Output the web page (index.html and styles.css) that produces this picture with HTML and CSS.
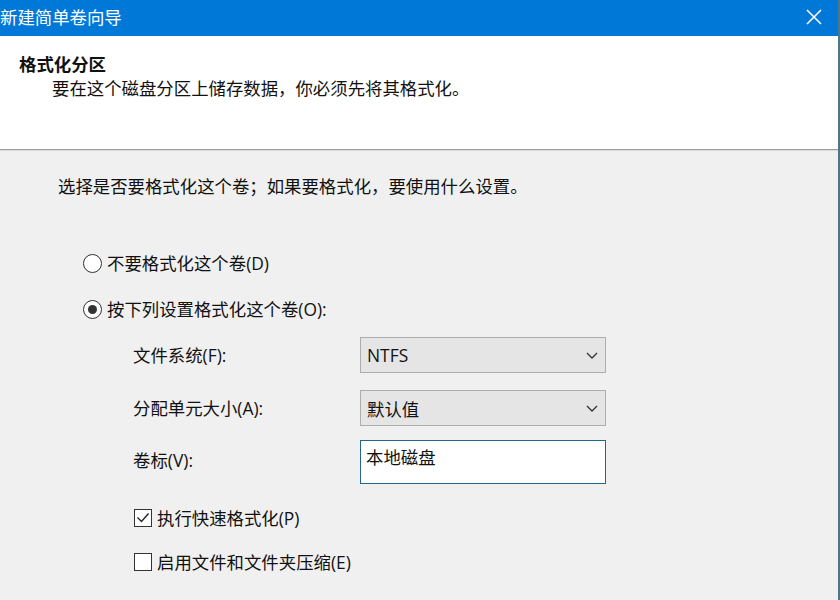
FILE: index.html
```html
<!DOCTYPE html>
<html lang="zh-CN">
<head>
<meta charset="utf-8">
<title>新建简单卷向导</title>
<link rel="stylesheet" href="styles.css">
</head>
<body>
<div class="window">
  <div class="titlebar">
    <span class="title">新建简单卷向导</span>
    <svg class="close" width="16" height="16" viewBox="0 0 16 16">
      <path d="M1 1 L15 15 M15 1 L1 15" stroke="#fff" stroke-width="1.6" fill="none"/>
    </svg>
  </div>

  <div class="header">
    <div class="header-title">格式化分区</div>
    <div class="header-sub">要在这个磁盘分区上储存数据，你必须先将其格式化。</div>
  </div>

  <div class="content">
    <div class="prompt">选择是否要格式化这个卷；如果要格式化，要使用什么设置。</div>

    <div class="radio radio-first">
      <span class="radio-dot"></span>
      <span>不要格式化这个卷(D)</span>
    </div>
    <div class="radio radio-second">
      <span class="radio-dot checked"></span>
      <span>按下列设置格式化这个卷(O):</span>
    </div>

    <div class="field field-fs">
      <span class="label">文件系统(F):</span>
      <div class="select">
        <span>NTFS</span>
        <svg class="chevron" width="12" height="7" viewBox="0 0 12 7"><path d="M1 1 L6 6 L11 1" stroke="#333" stroke-width="1.3" fill="none"/></svg>
      </div>
    </div>
    <div class="field field-unit">
      <span class="label">分配单元大小(A):</span>
      <div class="select">
        <span>默认值</span>
        <svg class="chevron" width="12" height="7" viewBox="0 0 12 7"><path d="M1 1 L6 6 L11 1" stroke="#333" stroke-width="1.3" fill="none"/></svg>
      </div>
    </div>
    <div class="field field-label">
      <span class="label">卷标(V):</span>
      <div class="textbox">本地磁盘</div>
    </div>

    <div class="check check-first">
      <span class="box">
        <svg width="16" height="16" viewBox="0 0 16 16"><path d="M2.5 7.5 L6.5 11.5 L13.5 3.5" stroke="#222" stroke-width="1.4" fill="none"/></svg>
      </span>
      <span>执行快速格式化(P)</span>
    </div>
    <div class="check check-second">
      <span class="box"></span>
      <span>启用文件和文件夹压缩(E)</span>
    </div>
  </div>
</div>
</body>
</html>
```

FILE: styles.css
```css
* {
  box-sizing: border-box;
}

html, body {
  margin: 0;
  padding: 0;
}

body {
  width: 840px;
  height: 600px;
  overflow: hidden;
  font-family: "Open Sans", "Noto Sans CJK SC", sans-serif;
  font-size: 17.4px;
  color: #111;
  background: #f0f0f0;
}

.window {
  width: 840px;
  height: 600px;
  border-right: 2px solid #4b7888;
  background: #f0f0f0;
}

/* Blue caption bar */
.titlebar {
  height: 36px;
  background: #0078d7;
  display: flex;
  align-items: center;
  justify-content: space-between;
  padding: 0 16px 2px 0;
  color: #fff;
}

.title {
  font-size: 17.4px;
  line-height: 24px;
  font-family: "Noto Sans CJK SC", sans-serif;
}

/* White wizard header */
.header {
  height: 114px;
  background: #fff;
  border-bottom: 1px solid #a0a0a0;
  box-shadow: 0 1px 0 #d9d9d9;
  padding-top: 16px;
}

.header-title {
  font-weight: bold;
  line-height: 24px;
  padding-left: 19px;
  font-family: "Noto Sans CJK SC", sans-serif;
}

.header-sub {
  line-height: 24px;
  padding-left: 52px;
}

/* Body of the page */
.content {
  padding-top: 24px;
}

.prompt {
  line-height: 24px;
  padding-left: 58px;
}

.radio {
  display: flex;
  align-items: center;
  line-height: 24px;
  padding-left: 83px;
}

.radio-first {
  margin-top: 53px;
}

.radio-second {
  margin-top: 22px;
}

.radio-dot {
  width: 19px;
  height: 19px;
  border: 1px solid #333;
  border-radius: 50%;
  background: #fff;
  margin-right: 5px;
  display: flex;
  align-items: center;
  justify-content: center;
}

.radio-dot.checked::after {
  content: "";
  width: 9px;
  height: 9px;
  border-radius: 50%;
  background: #333;
}

.field {
  display: flex;
  align-items: center;
  padding-left: 133px;
}

.field-fs {
  margin-top: 16px;
}

.field-unit {
  margin-top: 17px;
}

.field-label {
  margin-top: 14px;
  align-items: flex-start;
}

.label {
  width: 227px;
  line-height: 24px;
}

.field-label .label {
  margin-top: 8px;
}

.select {
  width: 246px;
  height: 36px;
  background: #e5e5e5;
  border: 1px solid #adadad;
  display: flex;
  align-items: center;
  justify-content: space-between;
  padding: 0 7px 0 6px;
}

.chevron {
  margin-top: 1px;
}

.textbox {
  width: 246px;
  height: 44px;
  background: #fff;
  border: 1px solid #24658c;
  padding: 4px 0 0 5px;
  line-height: 24px;
}

.check {
  display: flex;
  align-items: center;
  line-height: 24px;
  padding-left: 134px;
}

.check-first {
  margin-top: 22px;
}

.check-second {
  margin-top: 20px;
}

.box {
  width: 18px;
  height: 18px;
  border: 1px solid #333;
  background: #fff;
  margin-right: 5px;
  display: flex;
  align-items: center;
  justify-content: center;
}
```
